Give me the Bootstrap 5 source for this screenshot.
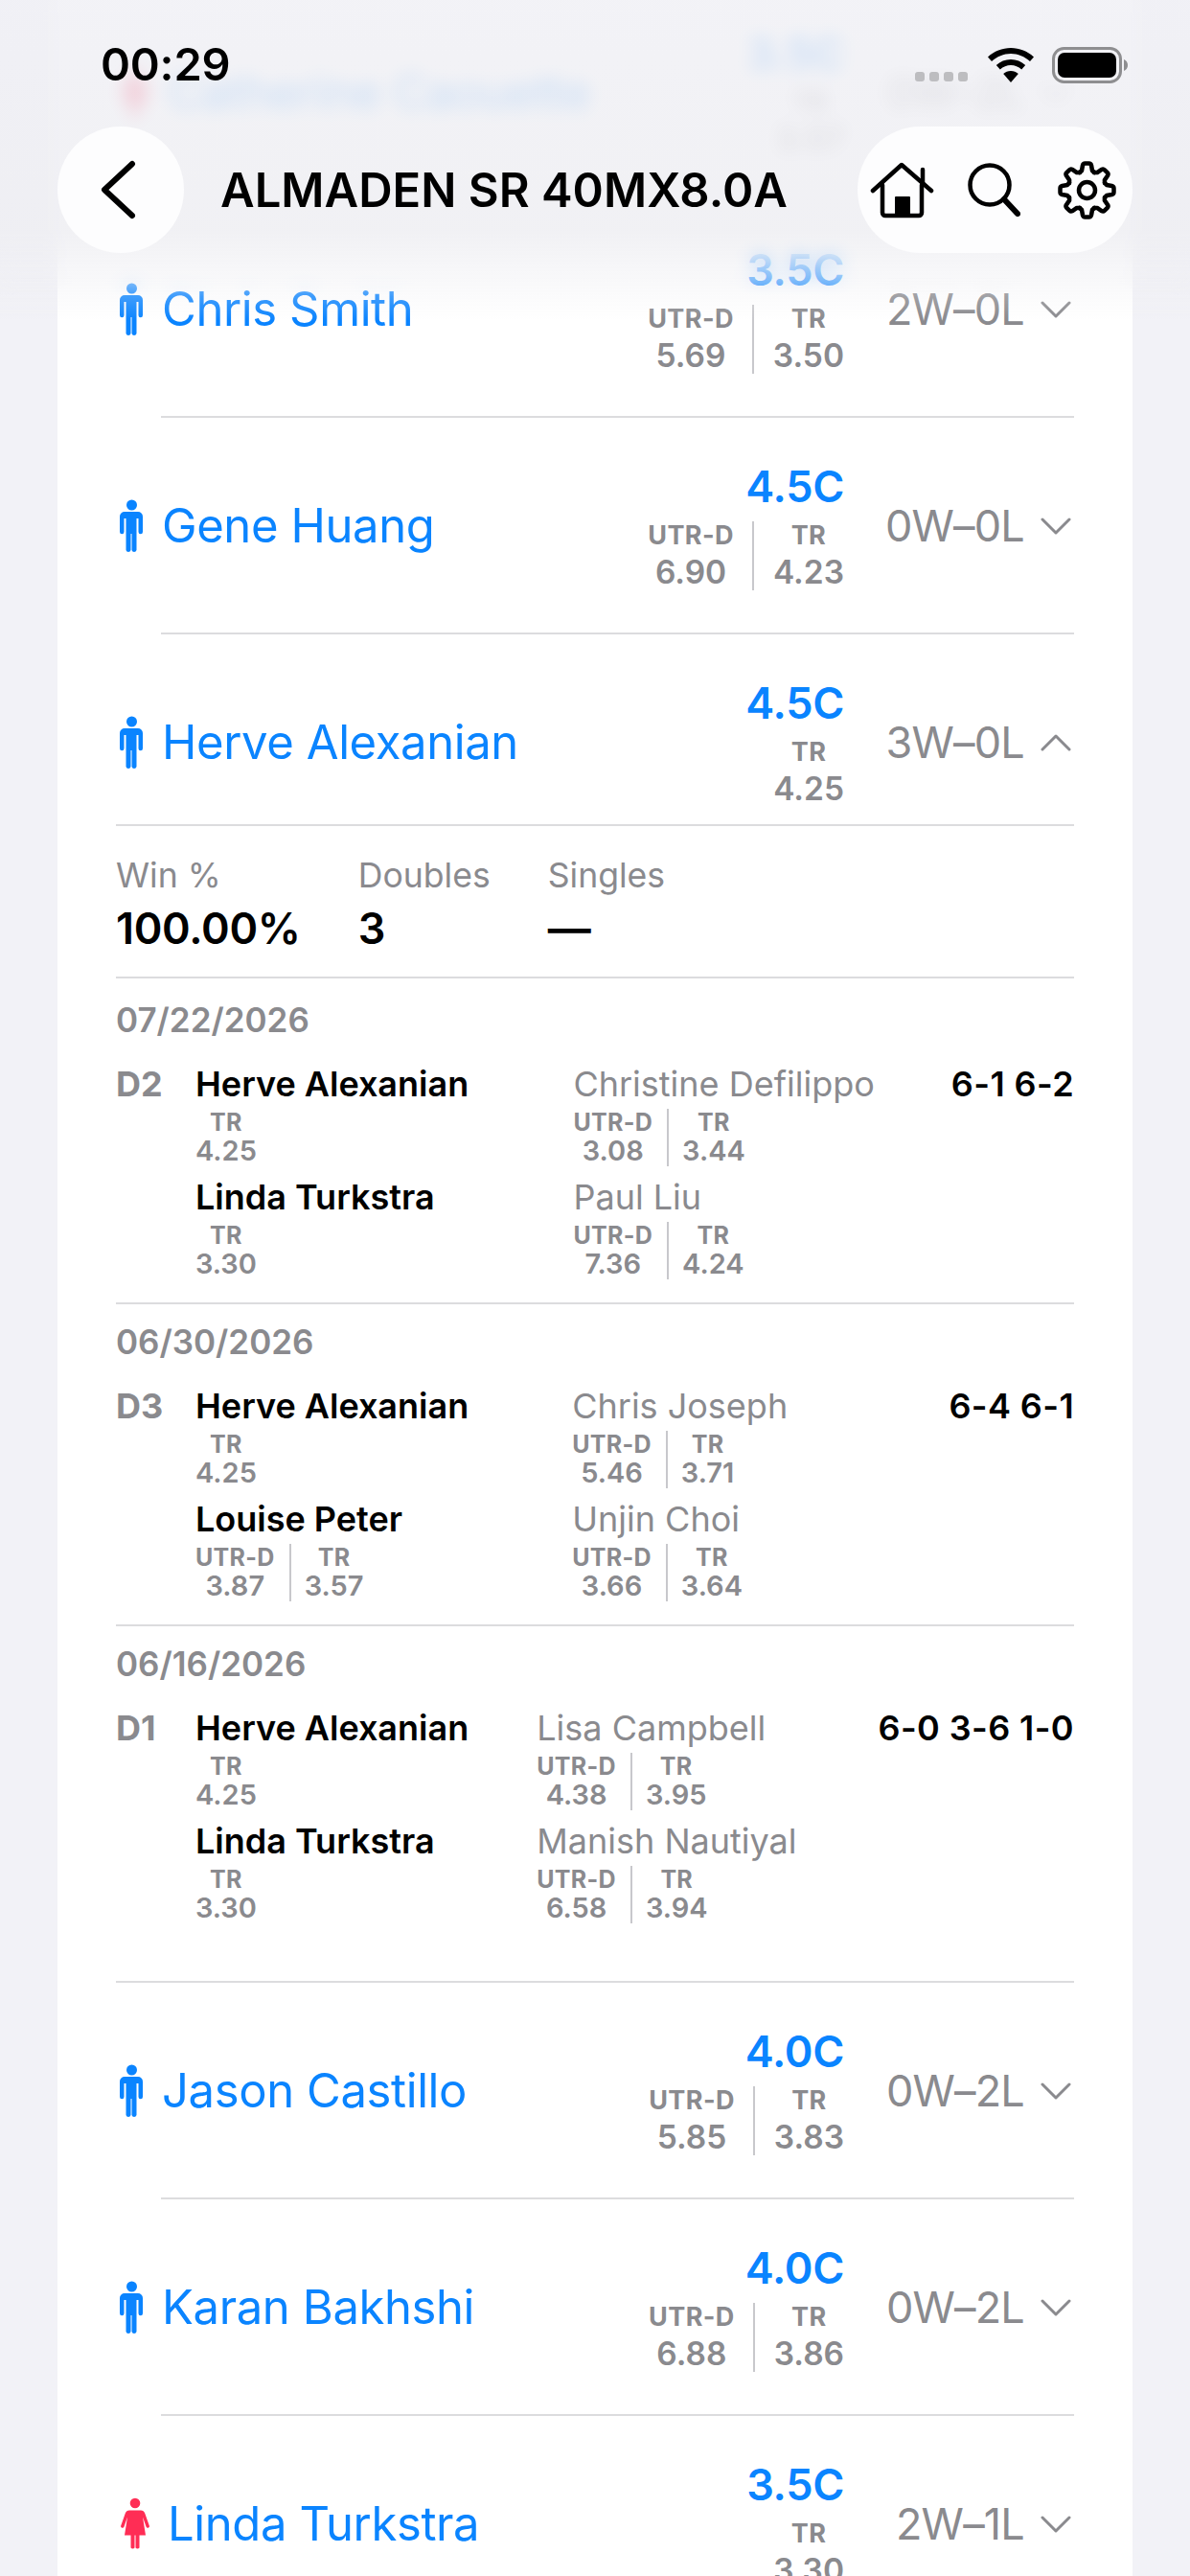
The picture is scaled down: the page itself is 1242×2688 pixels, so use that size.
<!DOCTYPE html>
<html lang="en">
<head>
    <meta charset="UTF-8">
    <meta name="viewport" content="width=device-width, initial-scale=1.0">
    <title>ALMADEN SR 40MX8.0A</title>
    <link href="https://cdn.jsdelivr.net/npm/bootstrap@5.3.3/dist/css/bootstrap.min.css" rel="stylesheet">
    <style>
        :root { --blue: #0a84ff; --grey: #8a8a8e; --line: #dcdcde; }
        html, body { height: 2688px; overflow: hidden; }
        body { font-family: Inter, "Liberation Sans", sans-serif; background-color: #f2f2f7; color: #000; }

        /* scrolled list */
        .team-list { margin: -16px 60px 0; padding: 0 61px; border-radius: 0; border: 0; background: #fff; }
        .player-row { padding: 46px 0 44px; }
        .player-row.is-open { padding-bottom: 18px; }
        .player-icon { width: 25px; height: 56px; margin: 0 19px 0 4px; flex: none; }
        .player-icon.female { width: 30px; margin-left: 5px; fill: #ff2d55; }
        .player-icon.male { fill: var(--blue); }
        .player-name { font-size: 49px; line-height: 60px; color: var(--blue); letter-spacing: -.4px; white-space: nowrap; }
        .rating-box { width: 302px; text-align: right; }
        .grade { font-size: 45px; line-height: 52px; font-weight: 600; color: var(--blue); letter-spacing: -.3px; }
        .metric-pair { margin-top: 10px; }
        .metric-cell { text-align: center; }
        .metric-cell + .metric-cell { border-left: 2px solid #c8c8cc; margin-left: 19px; padding-left: 20px; }
        .metric-label { font-size: 27px; line-height: 30px; font-weight: 700; color: var(--grey); letter-spacing: .4px; }
        .metric-value { font-size: 33.5px; line-height: 38px; margin-top: 4px; font-weight: 600; color: var(--grey); }
        .record { width: 240px; font-size: 45px; line-height: 60px; color: var(--grey); text-align: right; padding-right: 52px; position: relative; white-space: nowrap; letter-spacing: -.8px; flex: none; }
        .record svg { position: absolute; right: 3px; top: 20px; width: 32px; height: 20px; }
        .row-sep { height: 2px; background: var(--line); margin-left: 47px; }
        .row-sep.full { margin-left: 0; }

        /* expanded details */
        .stat-row { padding: 30px 0 22px; }
        .stat-col { margin-right: 60px; }
        .stat-label { font-size: 35.6px; line-height: 44px; color: var(--grey); }
        .stat-value { font-size: 45px; line-height: 56px; margin-top: 5px; font-weight: 600; letter-spacing: -.3px; }
        .match-block { padding: 19px 0 14px; }
        .match-block.first { padding-top: 23px; }
        .match-block.last { padding-bottom: 50px; }
        .match-date { font-size: 35px; line-height: 40px; font-weight: 600; color: var(--grey); margin-bottom: 25px; }
        .match-line { width: 83px; font-size: 36px; line-height: 44px; font-weight: 700; color: var(--grey); flex: none; }
        .match-col { flex: 1 1 0; min-width: 0; }
        .match-score { font-size: 36px; line-height: 44px; font-weight: 600; white-space: nowrap; letter-spacing: .4px; }
        .mplayer { height: 118px; }
        .mplayer-name { font-size: 36px; line-height: 44px; font-weight: 600; white-space: nowrap; }
        .opp .mplayer-name { font-weight: 400; color: var(--grey); }
        .mplayer .metric-label { font-size: 25px; line-height: 28px; letter-spacing: .3px; }
        .mplayer .metric-value { font-size: 29px; line-height: 32px; margin-top: 0; }
        .mplayer .metric-pair { margin-top: 4px; }
        .mplayer .metric-cell + .metric-cell { margin-left: 15px; padding-left: 14px; }

        /* top overlay */
        .top-blur { position: absolute; top: 0; left: 0; right: 0; height: 310px; backdrop-filter: blur(9px); -webkit-mask-image: linear-gradient(#000 80%, transparent); mask-image: linear-gradient(#000 80%, transparent); }
        .top-fade { position: absolute; top: 0; left: 0; right: 0; height: 335px; background: linear-gradient(rgba(240,240,245,.84), rgba(238,238,242,.84) 72%, rgba(242,242,247,0)); }
        .top-bar { position: absolute; top: 0; left: 0; right: 0; }
        .status-line { height: 132px; padding: 0 64px 0 105px; }
        .clock { font-size: 47px; font-weight: 600; line-height: 56px; margin-top: 39px; letter-spacing: -.2px; }
        .signal-dots { width: 56px; height: 10px; margin: 75px 20px 0 0; }
        .wifi-ico { width: 48px; height: 36px; margin: 50px 19px 0 0; }
        .battery-ico { width: 80px; height: 38px; margin-top: 49px; }
        .nav-line { padding: 0 60px; }
        .back-circle { width: 132px; height: 132px; border-radius: 50%; background: #fdfdfe; }
        .back-circle svg { width: 40px; height: 62px; margin-right: 8px; }
        .nav-title { font-size: 49px; font-weight: 600; margin-left: 38px; padding-top: 2px; white-space: nowrap; }
        .action-pill { width: 287px; height: 132px; border-radius: 66px; background: #fdfdfe; padding-left: 13px; }
        .ico-home { width: 67px; height: 59px; margin-right: 35px; }
        .ico-search { width: 55px; height: 56px; margin-right: 39px; }
        .ico-gear { width: 61px; height: 61px; }
    </style>
</head>
<body>
    <svg width="0" height="0" class="position-absolute">
        <defs>
            <symbol id="man" viewBox="0 0 25 56"><circle cx="12.5" cy="6" r="5.500"/><path d="M6 13h13a5 5 0 0 1 5 5v16a2.250 2.250 0 0 1-4.500 0V20h-2v33a2.600 2.600 0 0 1-5 0V36h-1v17a2.600 2.600 0 0 1-5 0V20h-2v14a2.250 2.250 0 0 1-4.500 0V18a5 5 0 0 1 5-5z"/></symbol>
            <symbol id="woman" viewBox="0 0 30 55"><circle cx="15" cy="5.500" r="5.300"/><path d="M9 13h12c2 0 3.500 1 4.200 3l4.600 13a1.700 1.700 0 0 1-3.200 1.200L23 20l3 19h-6.500v13a2.600 2.600 0 0 1-4 0V39h-1v13a2.600 2.600 0 0 1-4 0V39H4l3-19-3.600 10.200A1.700 1.700 0 0 1 .2 29l4.600-13C5.500 14 7 13 9 13z"/></symbol>
            <symbol id="chev-down" viewBox="0 0 32 20"><path d="M2 3l14 14L30 3" fill="none" stroke="#8a8a8e" stroke-width="3" stroke-linecap="round" stroke-linejoin="round"/></symbol>
            <symbol id="chev-up" viewBox="0 0 32 20"><path d="M2 17L16 3l14 14" fill="none" stroke="#8a8a8e" stroke-width="3" stroke-linecap="round" stroke-linejoin="round"/></symbol>
        </defs>
    </svg>

    <div class="card team-list">
        <div class="player-row d-flex align-items-center">
            <svg class="player-icon female"><use href="#woman"/></svg>
            <div class="player-name flex-grow-1">Catherine Caouette</div>
            <div class="rating-box">
                <div class="grade">3.5C</div>
                <div class="metric-pair d-flex justify-content-end"><div class="metric-cell"><div class="metric-label">TR</div><div class="metric-value">3.57</div></div></div>
            </div>
            <div class="record">0W–2L<svg><use href="#chev-down"/></svg></div>
        </div>
        <div class="row-sep"></div>

        <div class="player-row d-flex align-items-center">
            <svg class="player-icon male"><use href="#man"/></svg>
            <div class="player-name flex-grow-1">Chris Smith</div>
            <div class="rating-box">
                <div class="grade">3.5C</div>
                <div class="metric-pair d-flex justify-content-end"><div class="metric-cell"><div class="metric-label">UTR-D</div><div class="metric-value">5.69</div></div><div class="metric-cell"><div class="metric-label">TR</div><div class="metric-value">3.50</div></div></div>
            </div>
            <div class="record">2W–0L<svg><use href="#chev-down"/></svg></div>
        </div>
        <div class="row-sep"></div>

        <div class="player-row d-flex align-items-center">
            <svg class="player-icon male"><use href="#man"/></svg>
            <div class="player-name flex-grow-1">Gene Huang</div>
            <div class="rating-box">
                <div class="grade">4.5C</div>
                <div class="metric-pair d-flex justify-content-end"><div class="metric-cell"><div class="metric-label">UTR-D</div><div class="metric-value">6.90</div></div><div class="metric-cell"><div class="metric-label">TR</div><div class="metric-value">4.23</div></div></div>
            </div>
            <div class="record">0W–0L<svg><use href="#chev-down"/></svg></div>
        </div>
        <div class="row-sep"></div>

        <div class="player-row is-open d-flex align-items-center">
            <svg class="player-icon male"><use href="#man"/></svg>
            <div class="player-name flex-grow-1">Herve Alexanian</div>
            <div class="rating-box">
                <div class="grade">4.5C</div>
                <div class="metric-pair d-flex justify-content-end"><div class="metric-cell"><div class="metric-label">TR</div><div class="metric-value">4.25</div></div></div>
            </div>
            <div class="record">3W–0L<svg><use href="#chev-up"/></svg></div>
        </div>
        <div class="row-sep full"></div>

        <div class="stat-row d-flex">
            <div class="stat-col"><div class="stat-label">Win %</div><div class="stat-value">100.00%</div></div>
            <div class="stat-col"><div class="stat-label">Doubles</div><div class="stat-value">3</div></div>
            <div class="stat-col"><div class="stat-label">Singles</div><div class="stat-value">—</div></div>
        </div>
        <div class="row-sep full"></div>

        <div class="match-block first">
            <div class="match-date">07/22/2026</div>
            <div class="d-flex">
                <div class="match-line">D2</div>
                <div class="match-col">
                    <div class="mplayer"><div class="mplayer-name">Herve Alexanian</div><div class="metric-pair d-flex"><div class="metric-cell"><div class="metric-label">TR</div><div class="metric-value">4.25</div></div></div></div>
                    <div class="mplayer"><div class="mplayer-name">Linda Turkstra</div><div class="metric-pair d-flex"><div class="metric-cell"><div class="metric-label">TR</div><div class="metric-value">3.30</div></div></div></div>
                </div>
                <div class="match-col opp">
                    <div class="mplayer"><div class="mplayer-name">Christine Defilippo</div><div class="metric-pair d-flex"><div class="metric-cell"><div class="metric-label">UTR-D</div><div class="metric-value">3.08</div></div><div class="metric-cell"><div class="metric-label">TR</div><div class="metric-value">3.44</div></div></div></div>
                    <div class="mplayer"><div class="mplayer-name">Paul Liu</div><div class="metric-pair d-flex"><div class="metric-cell"><div class="metric-label">UTR-D</div><div class="metric-value">7.36</div></div><div class="metric-cell"><div class="metric-label">TR</div><div class="metric-value">4.24</div></div></div></div>
                </div>
                <div class="match-score">6-1 6-2</div>
            </div>
        </div>
        <div class="row-sep full"></div>

        <div class="match-block">
            <div class="match-date">06/30/2026</div>
            <div class="d-flex">
                <div class="match-line">D3</div>
                <div class="match-col">
                    <div class="mplayer"><div class="mplayer-name">Herve Alexanian</div><div class="metric-pair d-flex"><div class="metric-cell"><div class="metric-label">TR</div><div class="metric-value">4.25</div></div></div></div>
                    <div class="mplayer"><div class="mplayer-name">Louise Peter</div><div class="metric-pair d-flex"><div class="metric-cell"><div class="metric-label">UTR-D</div><div class="metric-value">3.87</div></div><div class="metric-cell"><div class="metric-label">TR</div><div class="metric-value">3.57</div></div></div></div>
                </div>
                <div class="match-col opp">
                    <div class="mplayer"><div class="mplayer-name">Chris Joseph</div><div class="metric-pair d-flex"><div class="metric-cell"><div class="metric-label">UTR-D</div><div class="metric-value">5.46</div></div><div class="metric-cell"><div class="metric-label">TR</div><div class="metric-value">3.71</div></div></div></div>
                    <div class="mplayer"><div class="mplayer-name">Unjin Choi</div><div class="metric-pair d-flex"><div class="metric-cell"><div class="metric-label">UTR-D</div><div class="metric-value">3.66</div></div><div class="metric-cell"><div class="metric-label">TR</div><div class="metric-value">3.64</div></div></div></div>
                </div>
                <div class="match-score">6-4 6-1</div>
            </div>
        </div>
        <div class="row-sep full"></div>

        <div class="match-block last">
            <div class="match-date">06/16/2026</div>
            <div class="d-flex">
                <div class="match-line">D1</div>
                <div class="match-col">
                    <div class="mplayer"><div class="mplayer-name">Herve Alexanian</div><div class="metric-pair d-flex"><div class="metric-cell"><div class="metric-label">TR</div><div class="metric-value">4.25</div></div></div></div>
                    <div class="mplayer"><div class="mplayer-name">Linda Turkstra</div><div class="metric-pair d-flex"><div class="metric-cell"><div class="metric-label">TR</div><div class="metric-value">3.30</div></div></div></div>
                </div>
                <div class="match-col opp">
                    <div class="mplayer"><div class="mplayer-name">Lisa Campbell</div><div class="metric-pair d-flex"><div class="metric-cell"><div class="metric-label">UTR-D</div><div class="metric-value">4.38</div></div><div class="metric-cell"><div class="metric-label">TR</div><div class="metric-value">3.95</div></div></div></div>
                    <div class="mplayer"><div class="mplayer-name">Manish Nautiyal</div><div class="metric-pair d-flex"><div class="metric-cell"><div class="metric-label">UTR-D</div><div class="metric-value">6.58</div></div><div class="metric-cell"><div class="metric-label">TR</div><div class="metric-value">3.94</div></div></div></div>
                </div>
                <div class="match-score">6-0 3-6 1-0</div>
            </div>
        </div>
        <div class="row-sep full"></div>

        <div class="player-row d-flex align-items-center">
            <svg class="player-icon male"><use href="#man"/></svg>
            <div class="player-name flex-grow-1">Jason Castillo</div>
            <div class="rating-box">
                <div class="grade">4.0C</div>
                <div class="metric-pair d-flex justify-content-end"><div class="metric-cell"><div class="metric-label">UTR-D</div><div class="metric-value">5.85</div></div><div class="metric-cell"><div class="metric-label">TR</div><div class="metric-value">3.83</div></div></div>
            </div>
            <div class="record">0W–2L<svg><use href="#chev-down"/></svg></div>
        </div>
        <div class="row-sep"></div>

        <div class="player-row d-flex align-items-center">
            <svg class="player-icon male"><use href="#man"/></svg>
            <div class="player-name flex-grow-1">Karan Bakhshi</div>
            <div class="rating-box">
                <div class="grade">4.0C</div>
                <div class="metric-pair d-flex justify-content-end"><div class="metric-cell"><div class="metric-label">UTR-D</div><div class="metric-value">6.88</div></div><div class="metric-cell"><div class="metric-label">TR</div><div class="metric-value">3.86</div></div></div>
            </div>
            <div class="record">0W–2L<svg><use href="#chev-down"/></svg></div>
        </div>
        <div class="row-sep"></div>

        <div class="player-row d-flex align-items-center">
            <svg class="player-icon female"><use href="#woman"/></svg>
            <div class="player-name flex-grow-1">Linda Turkstra</div>
            <div class="rating-box">
                <div class="grade">3.5C</div>
                <div class="metric-pair d-flex justify-content-end"><div class="metric-cell"><div class="metric-label">TR</div><div class="metric-value">3.30</div></div></div>
            </div>
            <div class="record">2W–1L<svg><use href="#chev-down"/></svg></div>
        </div>
    </div>

    <div class="top-blur"></div>
    <div class="top-fade"></div>
    <div class="top-bar">
        <div class="status-line d-flex align-items-start">
            <div class="clock flex-grow-1">00:29</div>
            <svg class="signal-dots" viewBox="0 0 56 10" fill="#bdbdc0"><rect x="0" width="10" height="10" rx="3"/><rect x="15" width="10" height="10" rx="3"/><rect x="30" width="10" height="10" rx="3"/><rect x="45" width="10" height="10" rx="3"/></svg>
            <svg class="wifi-ico" viewBox="0 0 48 36"><path d="M24 0c9 0 17.500 3.500 24 9.500l-4 4.500C38.500 9 31.500 6 24 6S9.500 9 4 14L0 9.500C6.500 3.500 15 0 24 0z"/><path d="M24 12c5.800 0 11 2.200 15.200 6l-4 4.500C32 19.700 28.200 18 24 18s-8 1.700-11.200 4.500l-4-4.500C13 14.200 18.200 12 24 12z"/><path d="M24 24c3 0 5.600 1 7.800 3L24 36l-7.800-9c2.200-2 4.800-3 7.800-3z"/></svg>
            <svg class="battery-ico" viewBox="0 0 80 38"><rect x="1.500" y="1.500" width="70" height="35" rx="11" fill="none" stroke="#8e8e90" stroke-width="3"/><rect x="6" y="6" width="61" height="26" rx="7"/><path d="M75 13c2.500 1 4 3 4 6s-1.500 5-4 6z" fill="#8e8e90"/></svg>
        </div>
        <div class="nav-line d-flex align-items-center">
            <div class="back-circle d-flex align-items-center justify-content-center">
                <svg viewBox="0 0 40 62"><path d="M36 4L7 31l29 27" fill="none" stroke="#000" stroke-width="6" stroke-linecap="round" stroke-linejoin="round"/></svg>
            </div>
            <div class="nav-title flex-grow-1">ALMADEN SR 40MX8.0A</div>
            <div class="action-pill d-flex align-items-center">
                <svg class="ico-home" viewBox="0 0 67 59" fill="none" stroke="#000" stroke-width="4.500" stroke-linecap="round" stroke-linejoin="round"><path d="M3 30L33 3l31 27"/><path d="M55 22V8"/><path d="M13 24v29a3 3 0 0 0 3 3h35a3 3 0 0 0 3-3V24"/><rect x="27" y="37" width="14" height="18" fill="#000" stroke-width="2"/></svg>
                <svg class="ico-search" viewBox="0 0 55 56" fill="none" stroke="#000" stroke-linecap="round"><circle cx="23" cy="23" r="20.500" stroke-width="4.500"/><path d="M38 38l14 15" stroke-width="6"/></svg>
                <svg class="ico-gear" viewBox="-30.500 -30.500 61 61" fill="none" stroke="#000" stroke-width="4.500" stroke-linecap="round" stroke-linejoin="round">
                    <path id="gear-tooth" d="M-7.650-18.500L-5.500-20.500L-4.500-26Q-4-28-2-28H2Q4-28 4.500-26L5.500-20.500L7.650-18.500"/>
                    <use href="#gear-tooth" transform="rotate(45)"/><use href="#gear-tooth" transform="rotate(90)"/><use href="#gear-tooth" transform="rotate(135)"/><use href="#gear-tooth" transform="rotate(180)"/><use href="#gear-tooth" transform="rotate(225)"/><use href="#gear-tooth" transform="rotate(270)"/><use href="#gear-tooth" transform="rotate(315)"/>
                    <circle r="8.500"/>
                </svg>
            </div>
        </div>
    </div>

    <script src="https://cdn.jsdelivr.net/npm/bootstrap@5.3.3/dist/js/bootstrap.bundle.min.js"></script>
</body>
</html>
